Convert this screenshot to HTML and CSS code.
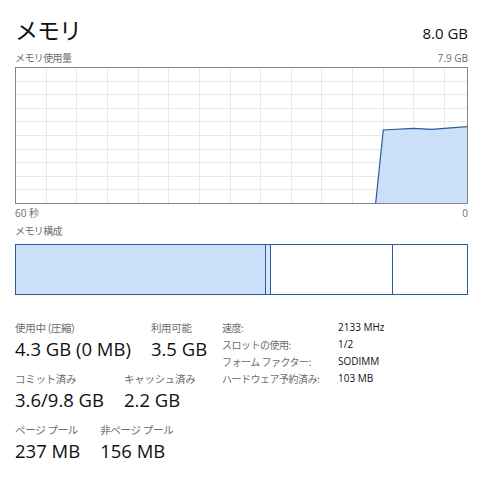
FILE: index.html
```html
<!DOCTYPE html>
<html lang="ja">
<head>
<meta charset="utf-8">
<link rel="stylesheet" href="styles.css">
</head>
<body>
<div class="panel">
  <div class="header">
    <div class="title">メモリ</div>
    <div class="total">8.0 GB</div>
  </div>
  <div class="caption-row">
    <span class="jp">メモリ使用量</span>
    <span>7.9 GB</span>
  </div>
  <svg class="graph" width="453" height="137" viewBox="0 0 453 137">
    <g class="grid">
      <line x1="31.5" y1="0" x2="31.5" y2="137"/>
      <line x1="61.5" y1="0" x2="61.5" y2="137"/>
      <line x1="92.5" y1="0" x2="92.5" y2="137"/>
      <line x1="123.5" y1="0" x2="123.5" y2="137"/>
      <line x1="153.5" y1="0" x2="153.5" y2="137"/>
      <line x1="184.5" y1="0" x2="184.5" y2="137"/>
      <line x1="215.5" y1="0" x2="215.5" y2="137"/>
      <line x1="245.5" y1="0" x2="245.5" y2="137"/>
      <line x1="276.5" y1="0" x2="276.5" y2="137"/>
      <line x1="306.5" y1="0" x2="306.5" y2="137"/>
      <line x1="337.5" y1="0" x2="337.5" y2="137"/>
      <line x1="368.5" y1="0" x2="368.5" y2="137"/>
      <line x1="398.5" y1="0" x2="398.5" y2="137"/>
      <line x1="429.5" y1="0" x2="429.5" y2="137"/>
      <line x1="0" y1="14.5" x2="453" y2="14.5"/>
      <line x1="0" y1="27.5" x2="453" y2="27.5"/>
      <line x1="0" y1="41.5" x2="453" y2="41.5"/>
      <line x1="0" y1="54.5" x2="453" y2="54.5"/>
      <line x1="0" y1="68.5" x2="453" y2="68.5"/>
      <line x1="0" y1="82.5" x2="453" y2="82.5"/>
      <line x1="0" y1="95.5" x2="453" y2="95.5"/>
      <line x1="0" y1="109.5" x2="453" y2="109.5"/>
      <line x1="0" y1="122.5" x2="453" y2="122.5"/>
    </g>
    <polygon class="area" points="360.7,136 368.3,63 398.3,61.3 416.7,62.3 452,59.7 452,136"/>
    <polyline class="line" points="360.7,136 368.3,63 398.3,61.3 416.7,62.3 452,59.7"/>
    <rect class="frame" x="0.5" y="0.5" width="452" height="136"/>
  </svg>
  <div class="axis-row">
    <span>60 <span class="jp">秒</span></span>
    <span>0</span>
  </div>
  <div class="caption jp">メモリ構成</div>
  <div class="compo">
    <div class="seg seg-used"></div>
    <div class="seg seg-mod"></div>
    <div class="seg seg-standby"></div>
    <div class="seg seg-free"></div>
  </div>
  <div class="stats">
    <div class="stats-left">
      <div class="stat-row">
        <div class="stat"><div class="label">使用中 (圧縮)</div><div class="value">4.3 GB (0 MB)</div></div>
        <div class="stat"><div class="label">利用可能</div><div class="value">3.5 GB</div></div>
      </div>
      <div class="stat-row">
        <div class="stat"><div class="label">コミット済み</div><div class="value">3.6/9.8 GB</div></div>
        <div class="stat"><div class="label">キャッシュ済み</div><div class="value">2.2 GB</div></div>
      </div>
      <div class="stat-row">
        <div class="stat"><div class="label">ページ プール</div><div class="value">237 MB</div></div>
        <div class="stat"><div class="label">非ページ プール</div><div class="value">156 MB</div></div>
      </div>
    </div>
    <div class="specs">
      <div class="spec-label">速度:</div><div class="spec-value">2133 MHz</div>
      <div class="spec-label">スロットの使用:</div><div class="spec-value">1/2</div>
      <div class="spec-label">フォーム ファクター:</div><div class="spec-value">SODIMM</div>
      <div class="spec-label">ハードウェア予約済み:</div><div class="spec-value">103 MB</div>
    </div>
  </div>
</div>
</body>
</html>
```

FILE: styles.css
```css
html, body {
  margin: 0;
  padding: 0;
  background: #ffffff;
}
body {
  font-family: "Open Sans", "Noto Sans CJK JP", sans-serif;
  color: #1a1a1a;
}
.jp {
  font-family: "Noto Sans CJK JP", sans-serif;
  letter-spacing: -0.6px;
}
.panel {
  width: 453px;
  padding: 10px 0 0 15px;
}
.header {
  display: flex;
  justify-content: space-between;
  align-items: flex-start;
  height: 40px;
}
.title {
  font-family: "Noto Sans CJK JP", sans-serif;
  font-size: 23px;
  letter-spacing: -1px;
  line-height: 34px;
  margin-top: 2px;
  color: #111;
}
.total {
  font-size: 15px;
  line-height: 20px;
  margin-top: 13px;
  color: #111;
}
.caption-row {
  display: flex;
  justify-content: space-between;
  font-size: 10px;
  line-height: 16px;
  color: #6d6d6d;
  height: 17px;
}
.graph {
  display: block;
}
.grid line {
  stroke: #e8e8e8;
  stroke-width: 1;
}
.area {
  fill: #c8ddf9;
  fill-opacity: 0.9;
}
.line {
  fill: none;
  stroke: #2a5b9f;
  stroke-width: 1.2;
}
.frame {
  fill: none;
  stroke: #858585;
  stroke-width: 1;
}
.axis-row {
  display: flex;
  justify-content: space-between;
  font-size: 10px;
  line-height: 16px;
  height: 18px;
  color: #6d6d6d;
  margin-top: 1px;
}
.caption {
  font-size: 10px;
  line-height: 16px;
  height: 21px;
  color: #6d6d6d;
}
.compo {
  display: flex;
  border: 1px solid #2b5c9e;
  height: 49px;
}
.seg {
  border-right: 1px solid #2b5c9e;
}
.seg-used {
  width: 249px;
  background: #cce0fb;
}
.seg-mod {
  width: 4px;
  background: #d6e6fb;
}
.seg-standby {
  width: 121px;
  background: #ffffff;
}
.seg-free {
  flex: 1;
  border-right: none;
}
.stats {
  display: flex;
  margin-top: 25px;
}
.stats-left {
  width: 207px;
  display: flex;
  flex-direction: column;
  gap: 8px;
}
.stat-row {
  display: flex;
  gap: 20px;
}
.stat .label {
  font-family: "Noto Sans CJK JP", sans-serif;
  font-size: 10.5px;
  letter-spacing: -0.3px;
  line-height: 15px;
  color: #6d6d6d;
}
.stat .value {
  font-size: 18.5px;
  line-height: 28px;
  color: #111;
}
.specs {
  display: grid;
  grid-template-columns: 116px auto;
  row-gap: 2px;
  align-content: start;
  font-size: 10px;
  line-height: 15px;
}
.spec-label {
  font-family: "Noto Sans CJK JP", sans-serif;
  letter-spacing: -0.5px;
  color: #6d6d6d;
}
.spec-value {
  color: #111;
}
```
